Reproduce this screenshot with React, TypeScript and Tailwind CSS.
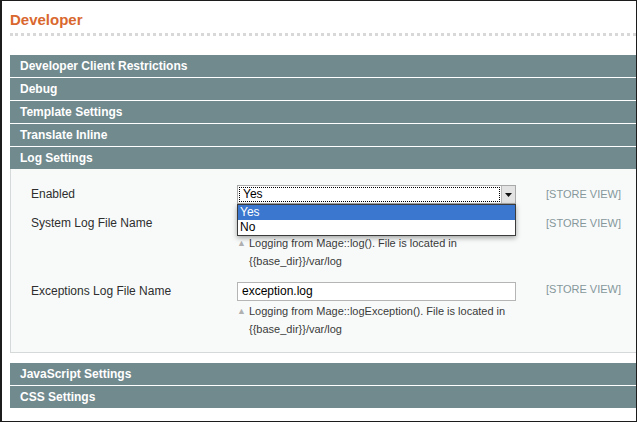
import React from 'react';

const TOP_SECTIONS = ['Developer Client Restrictions', 'Debug', 'Template Settings', 'Translate Inline', 'Log Settings'];
const BOTTOM_SECTIONS = ['JavaScript Settings', 'CSS Settings'];

const SectionHeader: React.FC<{ title: string }> = ({ title }) => (
  <div className="h-[22px] bg-[#718a8e] pl-[10px] flex items-center text-[12px] font-bold text-white leading-none">
    {title}
  </div>
);

const Scope: React.FC = () => (
  <span className="ml-[30px] text-[11px] text-[#85979a] leading-[19px]">[STORE VIEW]</span>
);

const Hint: React.FC<{ text: string }> = ({ text }) => (
  <div className="mt-[1px] text-[11px] text-[#3a3a3a] leading-[18px]">
    <div className="flex items-center">
      <span className="w-[12px] text-[9px] text-[#b0b0b0] leading-none">▲</span>
      <span>{text}</span>
    </div>
    <div className="pl-[12px]">{'{{base_dir}}/var/log'}</div>
  </div>
);

const App: React.FC = () => {
  return (
    <div className="w-[637px] h-[422px] overflow-hidden bg-white border border-l-2 border-[#1c1c1c] font-['Liberation_Sans',Arial,sans-serif]">
      <div className="pl-[8px]">
        {/* Title */}
        <div className="pt-[10px] h-[32px] text-[15px] font-bold text-[#d9682f] leading-[18px]">Developer</div>
        <div className="h-[3px] border-t-[3px] border-dotted border-[#d8d8d8]"></div>

        {/* Collapsed sections */}
        <div className="mt-[19px] flex flex-col gap-px">
          {TOP_SECTIONS.map((s) => (
            <SectionHeader key={s} title={s} />
          ))}
        </div>

        {/* Log settings body */}
        <div className="relative bg-[#f8fafa] border-l border-b border-[#d6d9d9] pl-[20px] pt-[16px] pb-[14px] text-[12px] text-[#2e2e2e]">
          {/* Enabled */}
          <div className="flex items-start">
            <span className="w-[206px] leading-[19px]">Enabled</span>
            <div className="relative w-[279px] h-[19px] bg-white border border-[#a9a9a9] flex">
              <div className="flex-1 m-px border border-dotted border-black pl-[3px] leading-[13px] text-[12px] text-black">Yes</div>
              <div className="w-[14px] bg-[#e3e3e3] border-l border-[#b8b8b8] flex items-center justify-center">
                <svg width="7" height="4" viewBox="0 0 7 4"><path d="M0 0h7L3.5 4z" fill="#111" /></svg>
              </div>
              {/* Open dropdown list */}
              <div className="absolute left-[-1px] top-[18px] w-[279px] bg-white border border-[#3c3c3c] shadow-[0_2px_5px_rgba(0,0,0,0.35)] z-10 text-[12px] leading-[15px]">
                <div className="bg-[#3b77cf] text-white pl-[2px]">Yes</div>
                <div className="text-black pl-[2px]">No</div>
              </div>
            </div>
            <Scope />
          </div>

          {/* System Log File Name (input hidden under the open list) */}
          <div className="mt-[10px] flex items-start">
            <span className="w-[206px] leading-[19px]">System Log File Name</span>
            <div className="w-[279px]">
              <div className="h-[19px] bg-white border border-[#b5b5b5]"></div>
              <Hint text="Logging from Mage::log(). File is located in" />
            </div>
            <Scope />
          </div>

          {/* Exceptions Log File Name */}
          <div className="mt-[12px] flex items-start">
            <span className="w-[206px] leading-[19px]">Exceptions Log File Name</span>
            <div className="w-[279px]">
              <div className="h-[19px] bg-white border border-[#b5b5b5] pl-[4px] leading-[17px] text-black">exception.log</div>
              <Hint text="Logging from Mage::logException(). File is located in" />
            </div>
            <span className="-mt-[2px]"><Scope /></span>
          </div>
        </div>

        <div className="mt-[10px] flex flex-col gap-px">
          {BOTTOM_SECTIONS.map((s) => (
            <SectionHeader key={s} title={s} />
          ))}
        </div>
      </div>
    </div>
  );
};

export default App;
